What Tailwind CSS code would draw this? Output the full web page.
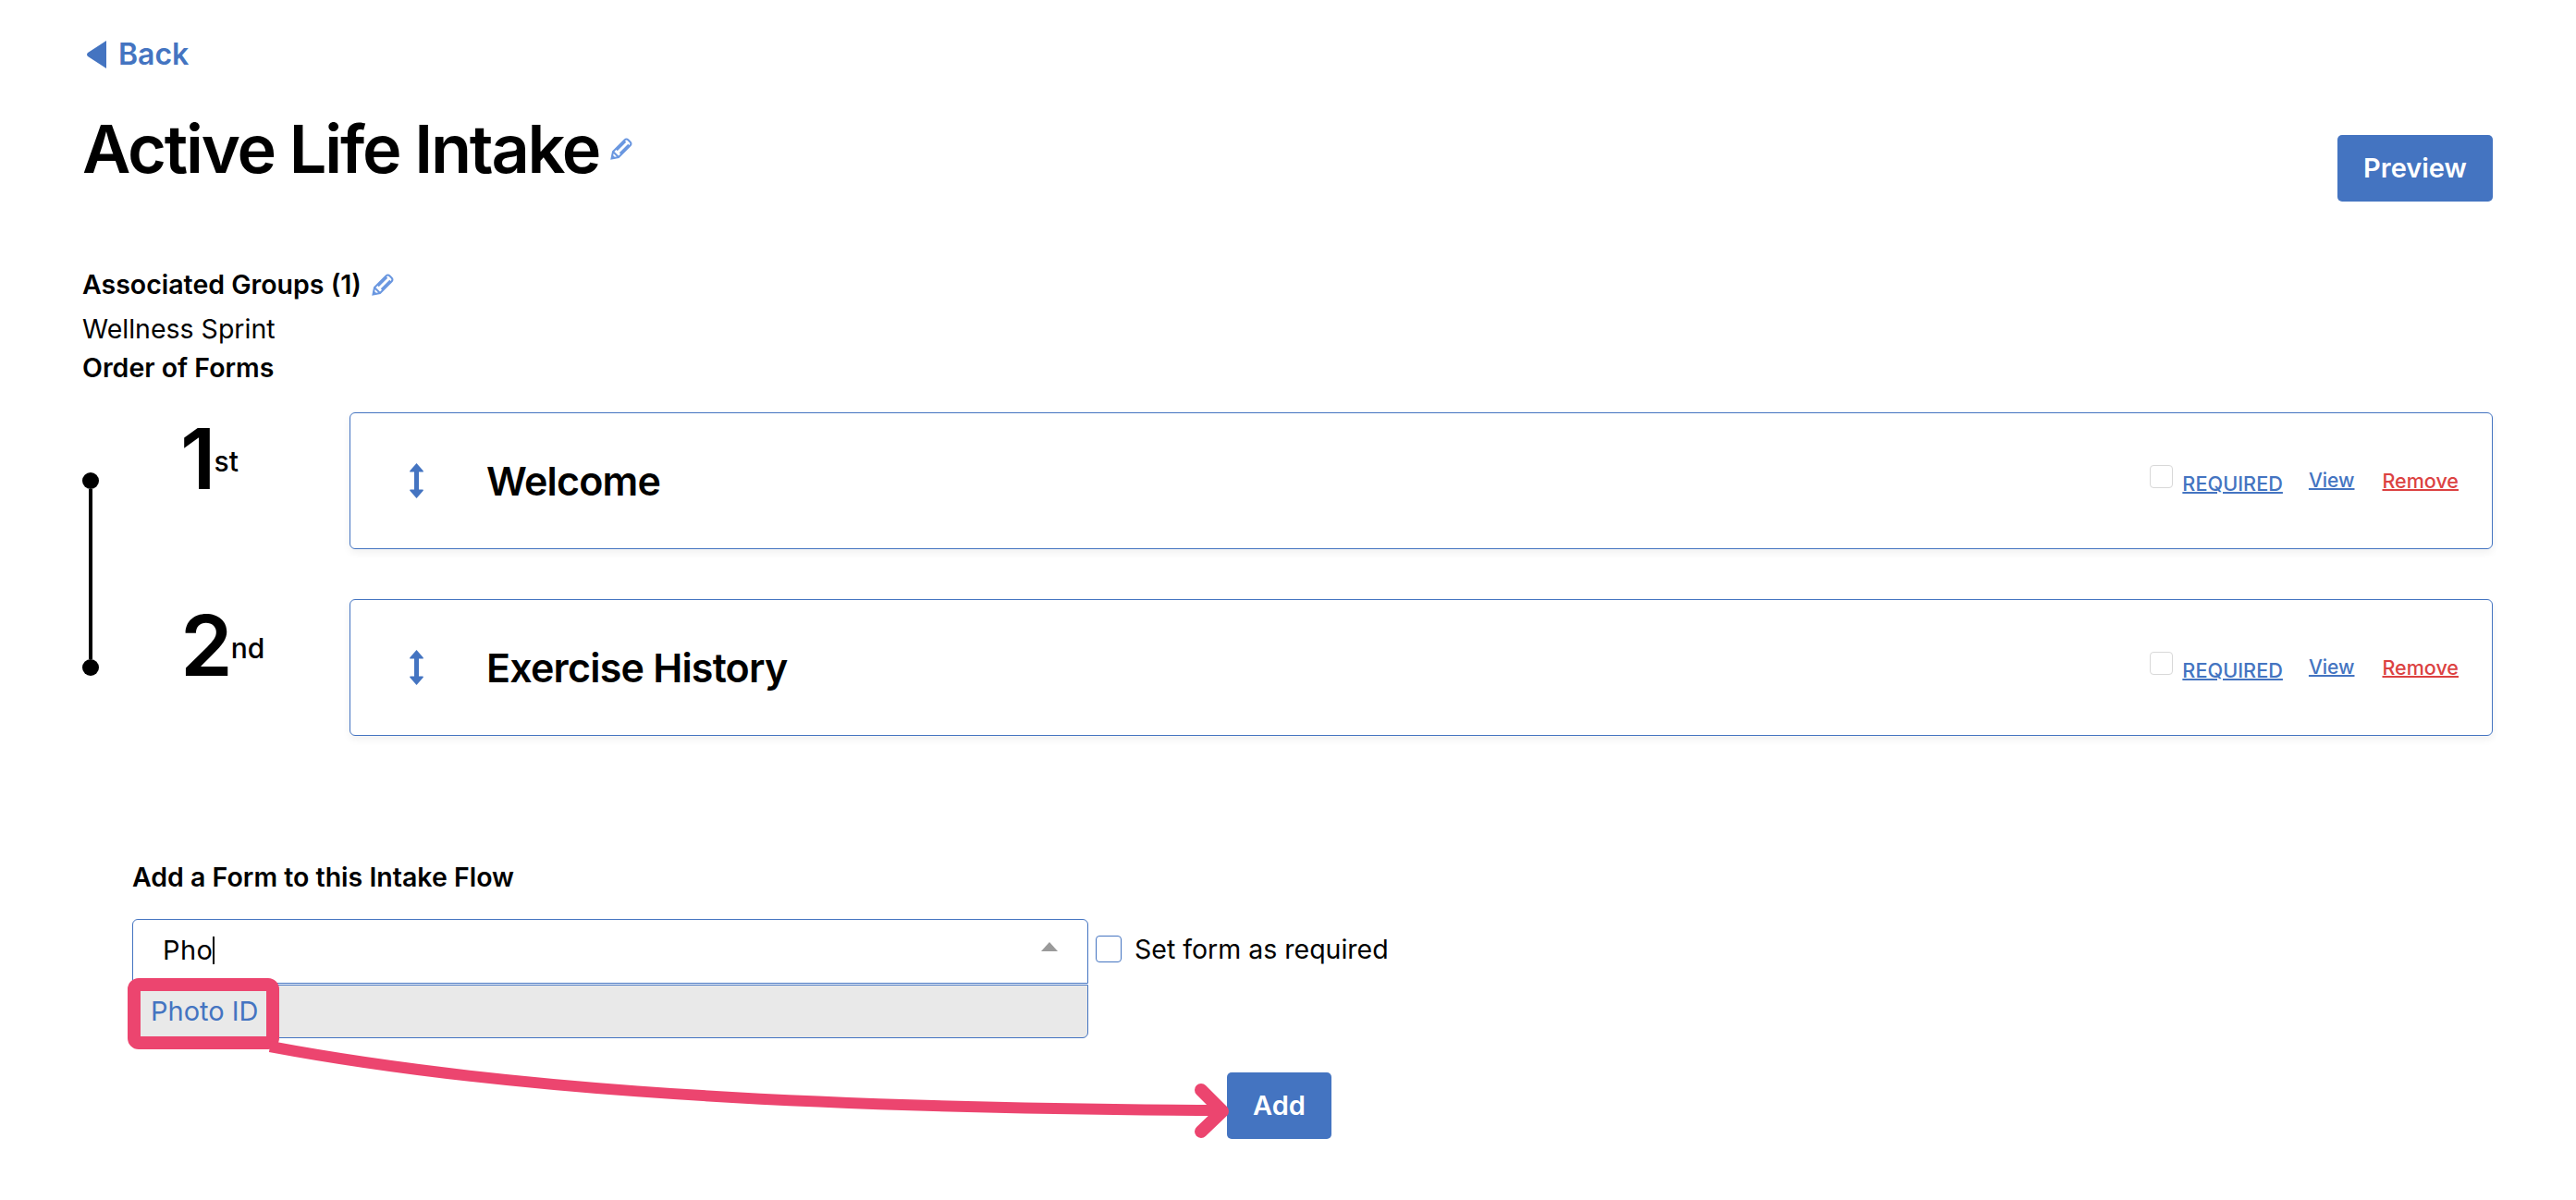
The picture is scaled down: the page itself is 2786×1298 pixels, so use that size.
<!DOCTYPE html>
<html lang="en">
<head>
    <meta charset="UTF-8">
    <title>Active Life Intake</title>
    <script src="https://cdn.jsdelivr.net/npm/@tailwindcss/browser@4"></script>
</head>
<body class="bg-white text-black font-['Inter',sans-serif] w-[2786px] h-[1298px] overflow-hidden">
<div class="relative h-full pl-[89px] pr-[90px]">

    <!-- Back link -->
    <div class="pt-[40px] h-[116px]">
        <a class="flex items-center gap-[13px] ml-[4px] h-[38px] text-[#4474c1] text-[32px] font-semibold">
            <svg width="22" height="30" viewBox="0 0 22 30"><path d="M22 0V30L2 17Q0 15 2 13Z" fill="#4474c1"/></svg>
            Back
        </a>
    </div>

    <!-- Title row -->
    <div class="flex justify-between h-[170px]">
        <div class="flex items-start">
            <h1 class="text-[72px] leading-[90px] font-semibold tracking-[-2.2px]">Active Life Intake</h1>
            <svg class="mt-[33px] ml-[12px]" width="24" height="24" viewBox="0 0 24 24" fill="none" stroke="#6a97e0" stroke-width="2"><path d="M1.500 22.500L3 15L15.500 2.500Q17.500 .5 19.500 2.500L21.500 4.500Q23.500 6.500 21.500 8.500L9 21ZM3 15L9 21M7 13.500L16.500 4M10.500 17L20 7.500"/><path d="M1 23L2 18L6 22Z" fill="#6a97e0" stroke="none"/></svg>
        </div>
        <button class="mt-[30px] w-[168px] h-[72px] bg-[#4474c1] rounded-[5px] text-white text-[29px] font-semibold">Preview</button>
    </div>

    <!-- Associated groups -->
    <div class="flex items-center h-[47px] pb-[3px] text-[28.5px] font-semibold">
        Associated Groups (1)
        <svg class="ml-[11px]" width="24" height="24" viewBox="0 0 24 24" fill="none" stroke="#6a97e0" stroke-width="2"><path d="M1.500 22.500L3 15L15.500 2.500Q17.500 .5 19.500 2.500L21.500 4.500Q23.500 6.500 21.500 8.500L9 21ZM3 15L9 21M7 13.500L16.500 4M10.500 17L20 7.500"/><path d="M1 23L2 18L6 22Z" fill="#6a97e0" stroke="none"/></svg>
    </div>
    <p class="h-[44px] leading-[45px] text-[28.5px]">Wellness Sprint</p>
    <p class="h-[42px] leading-[41px] text-[28.5px] font-semibold">Order of Forms</p>

    <!-- Order of forms -->
    <div class="relative flex flex-col gap-[54px] pt-[27px]">
        <div class="absolute left-0 top-[92px] flex flex-col items-center w-[18px] h-[220px]">
            <span class="w-[18px] h-[18px] rounded-full bg-black shrink-0"></span>
            <span class="w-[4px] flex-1 bg-black"></span>
            <span class="w-[18px] h-[18px] rounded-full bg-black shrink-0"></span>
        </div>

        <div class="flex h-[148px] pl-[105px]">
            <div class="flex items-start w-[184px] pl-[1px]">
                <span class="text-[91px] leading-[100px] font-semibold tracking-[-2px]">1</span>
                <span class="text-[30px] leading-[34px] mt-[36px] font-medium">st</span>
            </div>
            <div class="flex-1 flex items-center rounded-[6px] border border-[#4474c1] shadow-[0_4px_8px_rgba(0,0,0,0.06)] pl-[64px] pr-[36px]">
                <svg width="15" height="38" viewBox="0 0 15 38" fill="#4474c1"><path d="M7.500 0L14.500 8Q15.500 9.500 14 9.500H10V28.500H14Q15.500 28.500 14.500 30L7.500 38L.5 30Q-.5 28.500 1 28.500H5V9.500H1Q-.5 9.500 .5 8Z"/></svg>
                <span class="ml-[68px] text-[43px] font-semibold tracking-[-0.8px]">Welcome</span>
                <div class="ml-auto flex items-center">
                    <span class="w-[25px] h-[25px] -mt-[9px] rounded-[4px] border border-[#d8d8d8]"></span>
                    <a class="ml-[10px] mt-[6px] text-[21.7px] font-medium text-[#4474c1] underline decoration-2">REQUIRED</a>
                    <a class="ml-[28px] text-[21px] font-medium text-[#4474c1] underline decoration-2">View</a>
                    <a class="ml-[30px] text-[21.5px] font-medium text-[#dc4242] underline decoration-2">Remove</a>
                </div>
            </div>
        </div>

        <div class="flex h-[148px] pl-[105px]">
            <div class="flex items-start w-[184px] pl-[1px]">
                <span class="text-[91px] leading-[100px] font-semibold tracking-[-2px]">2</span>
                <span class="text-[30px] leading-[34px] mt-[36px] font-medium">nd</span>
            </div>
            <div class="flex-1 flex items-center rounded-[6px] border border-[#4474c1] shadow-[0_4px_8px_rgba(0,0,0,0.06)] pl-[64px] pr-[36px]">
                <svg width="15" height="38" viewBox="0 0 15 38" fill="#4474c1"><path d="M7.500 0L14.500 8Q15.500 9.500 14 9.500H10V28.500H14Q15.500 28.500 14.500 30L7.500 38L.5 30Q-.5 28.500 1 28.500H5V9.500H1Q-.5 9.500 .5 8Z"/></svg>
                <span class="ml-[68px] text-[43px] font-semibold tracking-[-0.8px]">Exercise History</span>
                <div class="ml-auto flex items-center">
                    <span class="w-[25px] h-[25px] -mt-[9px] rounded-[4px] border border-[#d8d8d8]"></span>
                    <a class="ml-[10px] mt-[6px] text-[21.7px] font-medium text-[#4474c1] underline decoration-2">REQUIRED</a>
                    <a class="ml-[28px] text-[21px] font-medium text-[#4474c1] underline decoration-2">View</a>
                    <a class="ml-[30px] text-[21.5px] font-medium text-[#dc4242] underline decoration-2">Remove</a>
                </div>
            </div>
        </div>
    </div>

    <!-- Add a form -->
    <div class="pl-[54px] pt-[135px]">
        <p class="h-[36px] leading-[36px] text-[28.5px] font-semibold">Add a Form to this Intake Flow</p>
        <div class="flex items-start mt-[27px]">
            <div class="w-[1034px]">
                <div class="flex items-center justify-between h-[70px] pl-[32px] pr-[32px] rounded-t-[6px] border border-[#4474c1]">
                    <span class="flex items-center -mt-[2px] text-[29px] tracking-[0.4px]">Pho<span class="w-[2px] h-[30px] bg-black"></span></span>
                    <svg class="mb-[11px]" width="18" height="10" viewBox="0 0 18 10"><path d="M9 0L18 10H0Z" fill="#9a9a9a"/></svg>
                </div>
                <div class="flex items-center h-[58px] mt-[1px] pl-[19px] rounded-b-[6px] border border-[#4474c1] bg-[#e9e9e9] text-[29px] text-[#4474c1]">Photo ID</div>
            </div>
            <span class="ml-[8px] mt-[18px] w-[28px] h-[29px] rounded-[4px] border border-[#4474c1]"></span>
            <span class="ml-[14px] mt-[12px] text-[28.5px]">Set form as required</span>
        </div>
        <button class="block ml-[1184px] mt-[37px] w-[113px] h-[72px] bg-[#4474c1] rounded-[5px] text-white text-[29px] font-semibold">Add</button>
    </div>

    <!-- Annotation over the dropdown -->
    <svg class="absolute left-0 top-0 pointer-events-none" width="2786" height="1298" viewBox="0 0 2786 1298" fill="none" stroke="#ec456f">
        <rect x="145" y="1065" width="150" height="63" rx="5" stroke-width="14"/>
        <path d="M292 1132C500 1171 800 1199 1322 1201" stroke-width="12"/>
        <path d="M1299 1179L1322 1202L1299 1224" stroke-width="14" stroke-linecap="round" stroke-linejoin="round"/>
    </svg>
</div>
</body>
</html>
